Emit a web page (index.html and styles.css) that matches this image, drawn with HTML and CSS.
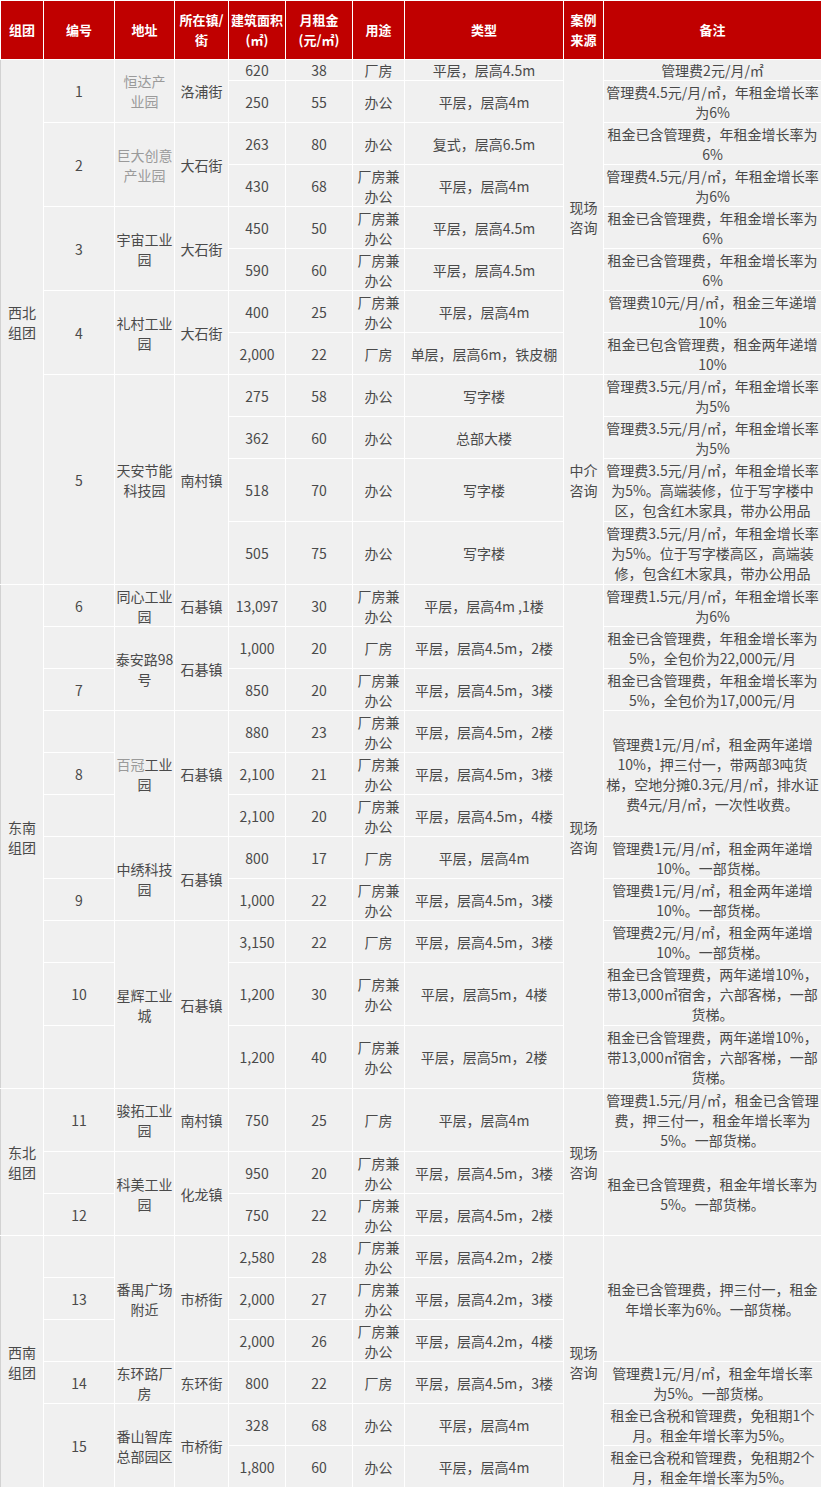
FILE: index.html
```html
<!DOCTYPE html>
<html lang="zh-CN">
<head>
<meta charset="utf-8">
<title>租金案例</title>
<link rel="stylesheet" href="styles.css">
</head>
<body>
<table class="rent">
<colgroup>
<col class="w-grp"><col class="w-no"><col class="w-addr"><col class="w-town"><col class="w-area"><col class="w-rent"><col class="w-use"><col class="w-type"><col class="w-src"><col class="w-note">
</colgroup>
<thead>
<tr class="head">
<th>组团</th><th>编号</th><th>地址</th><th>所在镇/<br>街</th><th>建筑面积<br>(㎡)</th><th>月租金<br>(元/㎡)</th><th>用途</th><th>类型</th><th>案例<br>来源</th><th>备注</th>
</tr>
</thead>
<tbody>
<tr class="h1">
<td class="grp" rowspan="12">西北<br>组团</td>
<td rowspan="2">1</td>
<td rowspan="2" class="lt">恒达产<br>业园</td>
<td rowspan="2">洛浦街</td>
<td>620</td><td>38</td><td>厂房</td><td>平层，层高4.5m</td>
<td rowspan="8">现场<br>咨询</td>
<td>管理费2元/月/㎡</td>
</tr>
<tr class="h2">
<td>250</td><td>55</td><td>办公</td><td>平层，层高4m</td>
<td>管理费4.5元/月/㎡，年租金增长率<br>为6%</td>
</tr>
<tr class="h2">
<td rowspan="2">2</td>
<td rowspan="2" class="lt">巨大创意<br>产业园</td>
<td rowspan="2">大石街</td>
<td>263</td><td>80</td><td>办公</td><td>复式，层高6.5m</td>
<td>租金已含管理费，年租金增长率为<br>6%</td>
</tr>
<tr class="h2">
<td>430</td><td>68</td><td>厂房兼<br>办公</td><td>平层，层高4m</td>
<td>管理费4.5元/月/㎡，年租金增长率<br>为6%</td>
</tr>
<tr class="h2">
<td rowspan="2">3</td>
<td rowspan="2">宇宙工业<br>园</td>
<td rowspan="2">大石街</td>
<td>450</td><td>50</td><td>厂房兼<br>办公</td><td>平层，层高4.5m</td>
<td>租金已含管理费，年租金增长率为<br>6%</td>
</tr>
<tr class="h2">
<td>590</td><td>60</td><td>厂房兼<br>办公</td><td>平层，层高4.5m</td>
<td>租金已含管理费，年租金增长率为<br>6%</td>
</tr>
<tr class="h2">
<td rowspan="2">4</td>
<td rowspan="2">礼村工业<br>园</td>
<td rowspan="2">大石街</td>
<td>400</td><td>25</td><td>厂房兼<br>办公</td><td>平层，层高4m</td>
<td>管理费10元/月/㎡，租金三年递增<br>10%</td>
</tr>
<tr class="h2">
<td>2,000</td><td>22</td><td>厂房</td><td>单层，层高6m，铁皮棚</td>
<td>租金已包含管理费，租金两年递增<br>10%</td>
</tr>
<tr class="h2">
<td rowspan="4">5</td>
<td rowspan="4">天安节能<br>科技园</td>
<td rowspan="4">南村镇</td>
<td>275</td><td>58</td><td>办公</td><td>写字楼</td>
<td rowspan="4">中介<br>咨询</td>
<td>管理费3.5元/月/㎡，年租金增长率<br>为5%</td>
</tr>
<tr class="h2">
<td>362</td><td>60</td><td>办公</td><td>总部大楼</td>
<td>管理费3.5元/月/㎡，年租金增长率<br>为5%</td>
</tr>
<tr class="h3">
<td>518</td><td>70</td><td>办公</td><td>写字楼</td>
<td>管理费3.5元/月/㎡，年租金增长率<br>为5%。高端装修，位于写字楼中<br>区，包含红木家具，带办公用品</td>
</tr>
<tr class="h3">
<td>505</td><td>75</td><td>办公</td><td>写字楼</td>
<td>管理费3.5元/月/㎡，年租金增长率<br>为5%。位于写字楼高区，高端装<br>修，包含红木家具，带办公用品</td>
</tr>
<tr class="h2">
<td class="grp" rowspan="11">东南<br>组团</td>
<td>6</td>
<td>同心工业<br>园</td>
<td>石碁镇</td>
<td>13,097</td><td>30</td><td>厂房兼<br>办公</td><td>平层，层高4m ,1楼</td>
<td rowspan="11">现场<br>咨询</td>
<td>管理费1.5元/月/㎡，年租金增长率<br>为6%</td>
</tr>
<tr class="h2">
<td></td>
<td rowspan="2">泰安路98<br>号</td>
<td rowspan="2">石碁镇</td>
<td>1,000</td><td>20</td><td>厂房</td><td>平层，层高4.5m，2楼</td>
<td>租金已含管理费，年租金增长率为<br>5%，全包价为22,000元/月</td>
</tr>
<tr class="h2">
<td>7</td>
<td>850</td><td>20</td><td>厂房兼<br>办公</td><td>平层，层高4.5m，3楼</td>
<td>租金已含管理费，年租金增长率为<br>5%，全包价为17,000元/月</td>
</tr>
<tr class="h2">
<td></td>
<td rowspan="3"><span class="lt">百冠</span>工业<br>园</td>
<td rowspan="3">石碁镇</td>
<td>880</td><td>23</td><td>厂房兼<br>办公</td><td>平层，层高4.5m，2楼</td>
<td rowspan="3">管理费1元/月/㎡，租金两年递增<br>10%，押三付一，带两部3吨货<br>梯，空地分摊0.3元/月/㎡，排水证<br>费4元/月/㎡，一次性收费。</td>
</tr>
<tr class="h2">
<td>8</td>
<td>2,100</td><td>21</td><td>厂房兼<br>办公</td><td>平层，层高4.5m，3楼</td>
</tr>
<tr class="h2">
<td></td>
<td>2,100</td><td>20</td><td>厂房兼<br>办公</td><td>平层，层高4.5m，4楼</td>
</tr>
<tr class="h2">
<td></td>
<td rowspan="2">中绣科技<br>园</td>
<td rowspan="2">石碁镇</td>
<td>800</td><td>17</td><td>厂房</td><td>平层，层高4m</td>
<td>管理费1元/月/㎡，租金两年递增<br>10%。一部货梯。</td>
</tr>
<tr class="h2">
<td>9</td>
<td>1,000</td><td>22</td><td>厂房兼<br>办公</td><td>平层，层高4.5m，3楼</td>
<td>管理费1元/月/㎡，租金两年递增<br>10%。一部货梯。</td>
</tr>
<tr class="h2">
<td></td>
<td rowspan="3">星辉工业<br>城</td>
<td rowspan="3">石碁镇</td>
<td>3,150</td><td>22</td><td>厂房</td><td>平层，层高4.5m，3楼</td>
<td>管理费2元/月/㎡，租金两年递增<br>10%。一部货梯。</td>
</tr>
<tr class="h3">
<td>10</td>
<td>1,200</td><td>30</td><td>厂房兼<br>办公</td><td>平层，层高5m，4楼</td>
<td>租金已含管理费，两年递增10%，<br>带13,000㎡宿舍，六部客梯，一部<br>货梯。</td>
</tr>
<tr class="h3">
<td></td>
<td>1,200</td><td>40</td><td>厂房兼<br>办公</td><td>平层，层高5m，2楼</td>
<td>租金已含管理费，两年递增10%，<br>带13,000㎡宿舍，六部客梯，一部<br>货梯。</td>
</tr>
<tr class="h3">
<td class="grp" rowspan="3">东北<br>组团</td>
<td>11</td>
<td>骏拓工业<br>园</td>
<td>南村镇</td>
<td>750</td><td>25</td><td>厂房</td><td>平层，层高4m</td>
<td rowspan="3">现场<br>咨询</td>
<td>管理费1.5元/月/㎡，租金已含管理<br>费，押三付一，租金年增长率为<br>5%。一部货梯。</td>
</tr>
<tr class="h2">
<td></td>
<td rowspan="2">科美工业<br>园</td>
<td rowspan="2">化龙镇</td>
<td>950</td><td>20</td><td>厂房兼<br>办公</td><td>平层，层高4.5m，3楼</td>
<td rowspan="2">租金已含管理费，租金年增长率为<br>5%。一部货梯。</td>
</tr>
<tr class="h2">
<td>12</td>
<td>750</td><td>22</td><td>厂房兼<br>办公</td><td>平层，层高4.5m，2楼</td>
</tr>
<tr class="h2">
<td class="grp" rowspan="6">西南<br>组团</td>
<td></td>
<td rowspan="3">番禺广场<br>附近</td>
<td rowspan="3">市桥街</td>
<td>2,580</td><td>28</td><td>厂房兼<br>办公</td><td>平层，层高4.2m，2楼</td>
<td rowspan="6">现场<br>咨询</td>
<td rowspan="3">租金已含管理费，押三付一，租金<br>年增长率为6%。一部货梯。</td>
</tr>
<tr class="h2">
<td>13</td>
<td>2,000</td><td>27</td><td>厂房兼<br>办公</td><td>平层，层高4.2m，3楼</td>
</tr>
<tr class="h2">
<td></td>
<td>2,000</td><td>26</td><td>厂房兼<br>办公</td><td>平层，层高4.2m，4楼</td>
</tr>
<tr class="h2">
<td>14</td>
<td>东环路厂<br>房</td>
<td>东环街</td>
<td>800</td><td>22</td><td>厂房</td><td>平层，层高4.5m，3楼</td>
<td>管理费1元/月/㎡，租金年增长率<br>为5%。一部货梯。</td>
</tr>
<tr class="h2">
<td rowspan="2">15</td>
<td rowspan="2">番山智库<br>总部园区</td>
<td rowspan="2">市桥街</td>
<td>328</td><td>68</td><td>办公</td><td>平层，层高4m</td>
<td>租金已含税和管理费，免租期1个<br>月。租金年增长率为5%。</td>
</tr>
<tr class="h2">
<td>1,800</td><td>60</td><td>办公</td><td>平层，层高4m</td>
<td>租金已含税和管理费，免租期2个<br>月，租金年增长率为5%。</td>
</tr>
</tbody>
</table>
</body>
</html>
```

FILE: styles.css
```css
html, body {
  margin: 0;
  padding: 0;
  background: #fff;
}

body {
  font-family: "Noto Sans CJK SC", "Noto Sans", sans-serif;
}

.rent {
  border-collapse: collapse;
  table-layout: fixed;
  width: 821px;
  font-size: 14px;
  line-height: 20px;
  color: #4a4a4a;
}

.w-grp { width: 43px; }
.w-no { width: 71px; }
.w-addr { width: 60px; }
.w-town { width: 54px; }
.w-area { width: 57px; }
.w-rent { width: 67px; }
.w-use { width: 52px; }
.w-type { width: 159px; }
.w-src { width: 40px; }
.w-note { width: 218px; }

.rent th,
.rent td {
  border: 1px solid #fff;
  padding: 0;
  text-align: center;
  vertical-align: middle;
  white-space: nowrap;
  overflow: hidden;
}

.rent th {
  background: #c00000;
  color: #fff;
  font-size: 13px;
  font-weight: bold;
  line-height: 20px;
}

.rent td {
  background: #f0f0f0;
}

.rent td.grp {
  border-left-color: #d2d2d2;
}

.head { height: 59px; }
.h1 { height: 21px; }
.h2 { height: 42px; }
.h3 { height: 63px; }

.lt {
  color: #9a9a9a;
}
```
